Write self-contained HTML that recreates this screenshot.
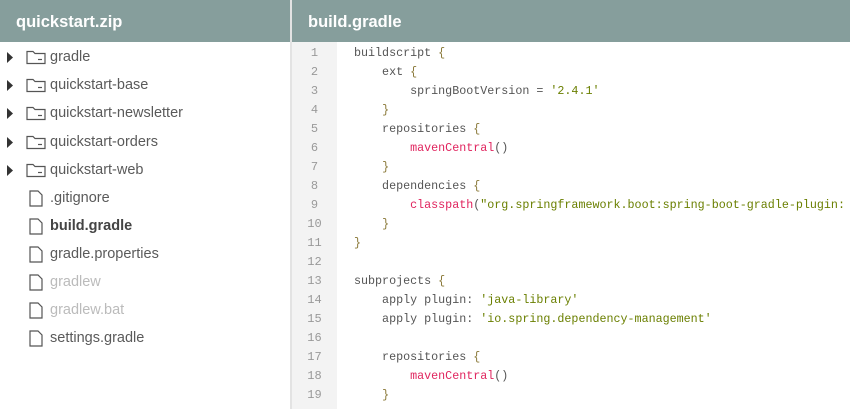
<!DOCTYPE html>
<html><head><style>
*{margin:0;padding:0;box-sizing:border-box}
body{width:850px;height:409px;overflow:hidden;background:#fff;font-family:"Liberation Sans",sans-serif;position:relative}
.hdr{position:absolute;top:0;height:42px;background:#869e9c;color:#fff;font-weight:bold;font-size:16.5px;line-height:44px}
#h1{left:0;width:290px;padding-left:16px}
#h2{left:292px;width:558px;padding-left:16px}
#div{position:absolute;left:290px;top:0;width:2px;height:409px;background:#e3e3e3}
.row{position:absolute;left:0;height:28px;width:290px;font-size:14.5px;color:#5a5a5a;line-height:28px}
.row span{position:absolute;left:50px;top:1px}
.row svg{position:absolute}
#gut{position:absolute;left:292px;top:42px;width:45px;height:367px;background:#f3f3f3}
.ln{position:absolute;left:292px;width:45px;text-align:center;font-family:"Liberation Mono",monospace;font-size:12px;color:#999;margin-top:1px}
.cl{position:absolute;left:354px;font-family:"Liberation Mono",monospace;font-size:11.7px;color:#555;white-space:pre;margin-top:2px}
.f{color:#e0245e}.s{color:#6a7f00}.b{color:#8b7a3a}
</style></head><body>
<div class="hdr" id="h1">quickstart.zip</div>
<div class="hdr" id="h2">build.gradle</div>
<div id="div"></div>
<div id="gut"></div>

<div class="row" style="top:42px"><svg style="left:7px;top:10px" width="6" height="11"><path d="M0 0L6 5.5L0 11Z" fill="#333"/></svg><svg style="left:26px;top:8px" width="20" height="15"><path d="M1 1.5h6l2 2h10v10H1z" fill="none" stroke="#555" stroke-width="1.2"/><path d="M12 9.5h4" stroke="#555" stroke-width="1.2"/></svg><span>gradle</span></div>
<div class="row" style="top:70px"><svg style="left:7px;top:10px" width="6" height="11"><path d="M0 0L6 5.5L0 11Z" fill="#333"/></svg><svg style="left:26px;top:8px" width="20" height="15"><path d="M1 1.5h6l2 2h10v10H1z" fill="none" stroke="#555" stroke-width="1.2"/><path d="M12 9.5h4" stroke="#555" stroke-width="1.2"/></svg><span>quickstart-base</span></div>
<div class="row" style="top:98px"><svg style="left:7px;top:10px" width="6" height="11"><path d="M0 0L6 5.5L0 11Z" fill="#333"/></svg><svg style="left:26px;top:8px" width="20" height="15"><path d="M1 1.5h6l2 2h10v10H1z" fill="none" stroke="#555" stroke-width="1.2"/><path d="M12 9.5h4" stroke="#555" stroke-width="1.2"/></svg><span>quickstart-newsletter</span></div>
<div class="row" style="top:127px"><svg style="left:7px;top:10px" width="6" height="11"><path d="M0 0L6 5.5L0 11Z" fill="#333"/></svg><svg style="left:26px;top:8px" width="20" height="15"><path d="M1 1.5h6l2 2h10v10H1z" fill="none" stroke="#555" stroke-width="1.2"/><path d="M12 9.5h4" stroke="#555" stroke-width="1.2"/></svg><span>quickstart-orders</span></div>
<div class="row" style="top:155px"><svg style="left:7px;top:10px" width="6" height="11"><path d="M0 0L6 5.5L0 11Z" fill="#333"/></svg><svg style="left:26px;top:8px" width="20" height="15"><path d="M1 1.5h6l2 2h10v10H1z" fill="none" stroke="#555" stroke-width="1.2"/><path d="M12 9.5h4" stroke="#555" stroke-width="1.2"/></svg><span>quickstart-web</span></div>

<div class="row" style="top:183px"><svg style="left:29px;top:7px" width="14" height="17"><path d="M1 1h8l4 4v11H1z" fill="none" stroke="#555" stroke-width="1.2"/></svg><span>.gitignore</span></div>
<div class="row" style="top:211px;font-weight:bold;color:#444"><svg style="left:29px;top:7px" width="14" height="17"><path d="M1 1h8l4 4v11H1z" fill="none" stroke="#555" stroke-width="1.2"/></svg><span>build.gradle</span></div>
<div class="row" style="top:239px"><svg style="left:29px;top:7px" width="14" height="17"><path d="M1 1h8l4 4v11H1z" fill="none" stroke="#555" stroke-width="1.2"/></svg><span>gradle.properties</span></div>
<div class="row" style="top:267px;color:#bbb"><svg style="left:29px;top:7px" width="14" height="17"><path d="M1 1h8l4 4v11H1z" fill="none" stroke="#555" stroke-width="1.2"/></svg><span>gradlew</span></div>
<div class="row" style="top:295px;color:#bbb"><svg style="left:29px;top:7px" width="14" height="17"><path d="M1 1h8l4 4v11H1z" fill="none" stroke="#555" stroke-width="1.2"/></svg><span>gradlew.bat</span></div>
<div class="row" style="top:323px"><svg style="left:29px;top:7px" width="14" height="17"><path d="M1 1h8l4 4v11H1z" fill="none" stroke="#555" stroke-width="1.2"/></svg><span>settings.gradle</span></div>

<div class="ln" style="top:45px">1</div><div class="cl" style="top:44px">buildscript <span class="b">{</span></div>
<div class="ln" style="top:64px">2</div><div class="cl" style="top:63px">    ext <span class="b">{</span></div>
<div class="ln" style="top:83px">3</div><div class="cl" style="top:82px">        springBootVersion = <span class="s">'2.4.1'</span></div>
<div class="ln" style="top:102px">4</div><div class="cl" style="top:101px">    <span class="b">}</span></div>
<div class="ln" style="top:121px">5</div><div class="cl" style="top:120px">    repositories <span class="b">{</span></div>
<div class="ln" style="top:140px">6</div><div class="cl" style="top:139px">        <span class="f">mavenCentral</span>()</div>
<div class="ln" style="top:159px">7</div><div class="cl" style="top:158px">    <span class="b">}</span></div>
<div class="ln" style="top:178px">8</div><div class="cl" style="top:177px">    dependencies <span class="b">{</span></div>
<div class="ln" style="top:197px">9</div><div class="cl" style="top:196px">        <span class="f">classpath</span>(<span class="s">"org.springframework.boot:spring-boot-gradle-plugin:</span></div>
<div class="ln" style="top:216px">10</div><div class="cl" style="top:215px">    <span class="b">}</span></div>
<div class="ln" style="top:235px">11</div><div class="cl" style="top:234px"><span class="b">}</span></div>
<div class="ln" style="top:254px">12</div>
<div class="ln" style="top:273px">13</div><div class="cl" style="top:272px">subprojects <span class="b">{</span></div>
<div class="ln" style="top:292px">14</div><div class="cl" style="top:291px">    apply plugin: <span class="s">'java-library'</span></div>
<div class="ln" style="top:311px">15</div><div class="cl" style="top:310px">    apply plugin: <span class="s">'io.spring.dependency-management'</span></div>
<div class="ln" style="top:330px">16</div>
<div class="ln" style="top:349px">17</div><div class="cl" style="top:348px">    repositories <span class="b">{</span></div>
<div class="ln" style="top:368px">18</div><div class="cl" style="top:367px">        <span class="f">mavenCentral</span>()</div>
<div class="ln" style="top:387px">19</div><div class="cl" style="top:386px">    <span class="b">}</span></div>
</body></html>
